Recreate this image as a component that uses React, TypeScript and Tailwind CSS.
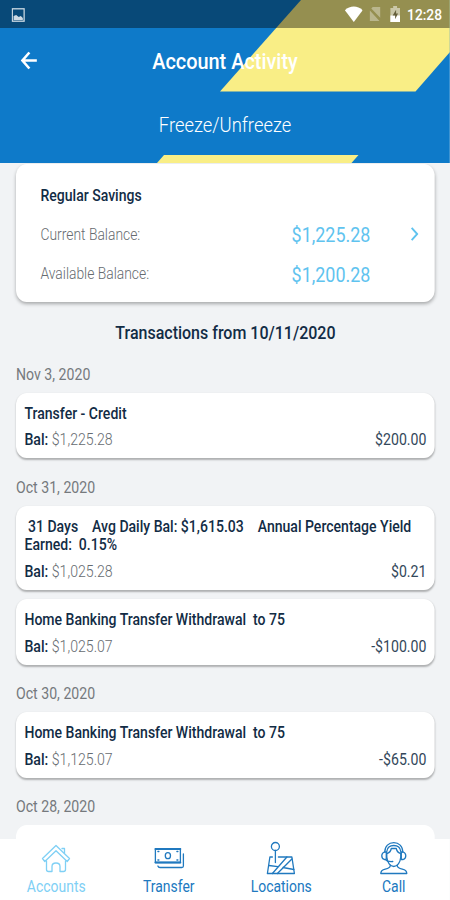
import type { ReactNode } from 'react'

interface Transaction {
  title: string
  balance: string
  amount: string
}

interface TransactionGroup {
  date: string
  items: Transaction[]
}

const groups: TransactionGroup[] = [
  {
    date: 'Nov 3, 2020',
    items: [{ title: 'Transfer - Credit', balance: '$1,225.28', amount: '$200.00' }]
  },
  {
    date: 'Oct 31, 2020',
    items: [
      {
        title: ' 31 Days    Avg Daily Bal: $1,615.03    Annual Percentage Yield\nEarned:  0.15%',
        balance: '$1,025.28',
        amount: '$0.21'
      },
      { title: 'Home Banking Transfer Withdrawal  to 75', balance: '$1,025.07', amount: '-$100.00' }
    ]
  },
  {
    date: 'Oct 30, 2020',
    items: [{ title: 'Home Banking Transfer Withdrawal  to 75', balance: '$1,125.07', amount: '-$65.00' }]
  },
  { date: 'Oct 28, 2020', items: [] }
]

function StatusBar() {
  return (
    <div className="relative flex h-7 items-center justify-between bg-black/40 pl-[13px] pr-[9px] text-white">
      <svg className="mt-[1px] h-[14px] w-[15px] opacity-80" viewBox="0 0 13 14" preserveAspectRatio="none">
        <rect x="0.7" y="0.8" width="11.6" height="12.4" fill="none" stroke="currentColor" strokeWidth="1.3" />
        <path d="M2 12V8l2.500-1 2.500 2 2-1 2 2v2z" fill="currentColor" />
      </svg>
      <div className="flex items-center">
        <svg className="h-4 w-5" viewBox="0 0 18 16" preserveAspectRatio="none" fill="currentColor">
          <path d="M0 4.200C5-.7 13-.7 18 4.200L9 16z" />
        </svg>
        <svg className="ml-[7px] h-[14px] w-[13px] opacity-35" viewBox="0 0 12 14" preserveAspectRatio="none">
          <path d="M1 3.500 11 14H1zM4 0h8v11L2.500 1.500z" fill="currentColor" />
        </svg>
        <svg className="ml-[11px] h-[16px] w-[11px]" viewBox="0 0 10 17" preserveAspectRatio="none">
          <path d="M3 0h4v2h3v15H0V2h3z" fill="currentColor" opacity="0.5" />
          <path d="M0 10h10v7H0z" fill="currentColor" />
          <path d="M6 4 2.500 10H5v4l3-6H6z" fill="#66603c" />
        </svg>
        <span className="ml-[8px] mt-[2px] text-[15.500px] leading-7 font-medium">12:28</span>
      </div>
    </div>
  )
}

function Header() {
  return (
    <header className="relative h-[163px] shrink-0 overflow-hidden bg-[#0e7ac9] text-white">
      {/* Brand stripes behind the bars */}
      <svg className="absolute inset-0 h-[163px] w-full" viewBox="0 0 450 163" preserveAspectRatio="none">
        <path d="M301 0H450V52L415.500 91.500H220z" fill="#f9ee86" />
        <path d="M164 155H358.500L351.500 163H157z" fill="#f9ee86" />
      </svg>
      <StatusBar />
      <div className="relative flex h-[66px] items-center justify-center">
        <svg className="absolute left-[23px] top-[23px] h-[19px] w-[19px]" viewBox="0 0 17 19" preserveAspectRatio="none" fill="none" stroke="currentColor" strokeWidth="2.600">
          <path d="M16.500 9.500H2M9 1.500 2 9.500l7 8" />
        </svg>
        <h1 className="text-[22.400px] leading-[26px] font-medium">Account Activity</h1>
      </div>
      <div className="relative flex h-[63px] items-center justify-center text-[20.700px] font-light text-white">
        Freeze/Unfreeze
      </div>
    </header>
  )
}

function BalanceRow({ label, value }: { label: string; value: string }) {
  return (
    <div className="flex h-[39.500px] items-center justify-between">
      <span className="text-[15.600px] font-light text-[#666b70]">{label}</span>
      <span className="text-[20.200px] text-[#5fc3ef]">{value}</span>
    </div>
  )
}

function AccountCard() {
  return (
    <section className="relative mt-[1px] flex h-[137.500px] flex-col rounded-[12px] bg-white pl-[27.500px] pr-[72.500px] pt-[11.500px] shadow-[0_2px_4px_rgba(0,0,0,0.3)]">
      <h2 className="h-[40px] text-[15.800px] leading-[40px] font-medium text-[#122c45]">Regular Savings</h2>
      <BalanceRow label="Current Balance:" value="$1,225.28" />
      <BalanceRow label="Available Balance:" value="$1,200.28" />
      <svg className="absolute right-[18px] top-[63px] h-[14px] w-[9px]" viewBox="0 0 8 13" preserveAspectRatio="none" fill="none" stroke="#5fc3ef" strokeWidth="1.900">
        <path d="M1 .8 6.500 6.500 1 12.200" />
      </svg>
    </section>
  )
}

function TransactionCard({ title, balance, amount }: Transaction) {
  return (
    <article className="rounded-[12px] bg-white px-[9.500px] pb-[6.500px] pt-[12px] shadow-[0_1.500px_2px_rgba(0,0,0,0.28)]">
      <p className="whitespace-pre text-[15.800px] leading-[18.500px] font-medium text-[#122c45]">{title}</p>
      <div className="mt-[5.500px] flex h-[23px] items-center justify-between text-[15.900px]">
        <span className="font-light text-[#666b70]">
          <span className="font-medium text-[#122c45]">Bal:</span> {balance}
        </span>
        <span className="text-[#33475a]">{amount}</span>
      </div>
    </article>
  )
}

function NavItem({ label, active, children }: { label: string; active?: boolean; children: ReactNode }) {
  return (
    <a className={`flex flex-1 flex-col items-center ${active ? 'text-[#7fd0f5]' : 'text-[#2079bf]'}`}>
      <svg className="h-[34px] w-[36px]" viewBox="0 0 32 34" preserveAspectRatio="none" fill="none" stroke="currentColor" strokeWidth="1.300" strokeLinejoin="round" strokeLinecap="round">
        {children}
      </svg>
      <span className="mt-[2px] text-[15.700px] leading-[20px]">{label}</span>
    </a>
  )
}

function BottomNav() {
  return (
    <nav className="relative flex h-[61px] shrink-0 bg-white pt-[2px]">
      <NavItem label="Accounts" active>
        <path d="M2.500 17.500 16 4.500l13.500 13-2.300 3L16 9.800 4.800 20.500z" />
        <path d="M22 7.500h2.500V12" />
        <path d="M6.500 20v8.500q0 2 2 2h3.500v-5q0-3.500 4-3.500t4 3.500v5h3.500q2 0 2-2V20" />
      </NavItem>
      <NavItem label="Transfer">
        <rect x="2.500" y="8" width="25" height="13.500" />
        <path d="M2.500 8h25M2.500 21.500h25" strokeWidth="1.800" />
        <ellipse cx="15" cy="14.700" rx="2.600" ry="3" />
        <path d="M5 10.500h1M24 10.500h1M5 19h1M24 19h1M30.500 13v12q0 1.500-1.500 1.500H7q-1.500 0-2-1.500" />
      </NavItem>
      <NavItem label="Locations">
        <circle cx="10.500" cy="5.500" r="4" />
        <path d="M10.500 9.500V21.500" />
        <path d="M7.500 16H5L2.500 32.500h27L27 16H13.500" />
        <path d="M7.500 32.500 22 16M12.500 32.500 27 18M4 24.500l9 1.200M18 26.500l11 2" />
      </NavItem>
      <NavItem label="Call">
        <path d="M9 12v4c.5 5.500 3.500 9.500 7 9.500s6.500-4 7-9.500v-4" />
        <path d="M9 12.500C11.500 12 13 10 13.500 7.500h5C19 10 20.500 12 23 12.500" />
        <path d="M7 11C7 5 11 1.700 16 1.700S25 5 25 11" />
        <path d="M9 10.500C9.500 6.500 12 4.500 16 4.500s6.500 2 7 6" />
        <path d="M8.500 11H6.500Q4 12 4 14.800t2.500 3.700h2zM23.500 11h2q2.500 1 2.500 3.800t-2.500 3.700h-2zM7.500 18.500q2 2.500 7.500 2" />
        <path d="M12.500 24.500c0 2.500-2 3-5 3.700-2.700.6-4.500 2-4.500 4.300h26c0-2.300-1.800-3.700-4.500-4.300-3-.7-5-1.200-5-3.700" />
      </NavItem>
    </nav>
  )
}

export default function App() {
  return (
    <div className="h-[900px] w-[450px] overflow-hidden bg-[#f1f3f5]">
      {/* 9:16 phone screen squeezed into the 1:2 frame */}
      <div className="flex h-[900px] w-[506.250px] origin-top-left scale-x-[0.8889] flex-col font-[Roboto,sans-serif]">
        <Header />
        <main className="min-h-0 flex-1 overflow-hidden pl-[18px] pr-[17px]">
          <AccountCard />
          <h2 className="mt-[17.500px] text-center text-[18px] leading-7 font-medium text-[#122c45]">
            Transactions from 10/11/2020
          </h2>
          <div className="flex flex-col gap-[20.500px] pt-[18.500px]">
            {groups.map(group => (
              <section key={group.date}>
                <h3 className="h-[27px] text-[15.900px] leading-[18px] text-[#75797d]">{group.date}</h3>
                <div className="flex flex-col gap-[9.500px]">
                  {group.items.map(item => (
                    <TransactionCard key={item.balance} {...item} />
                  ))}
                  {group.items.length === 0 && <div className="h-[66px] rounded-[12px] bg-white" />}
                </div>
              </section>
            ))}
          </div>
        </main>
        <BottomNav />
      </div>
    </div>
  )
}
